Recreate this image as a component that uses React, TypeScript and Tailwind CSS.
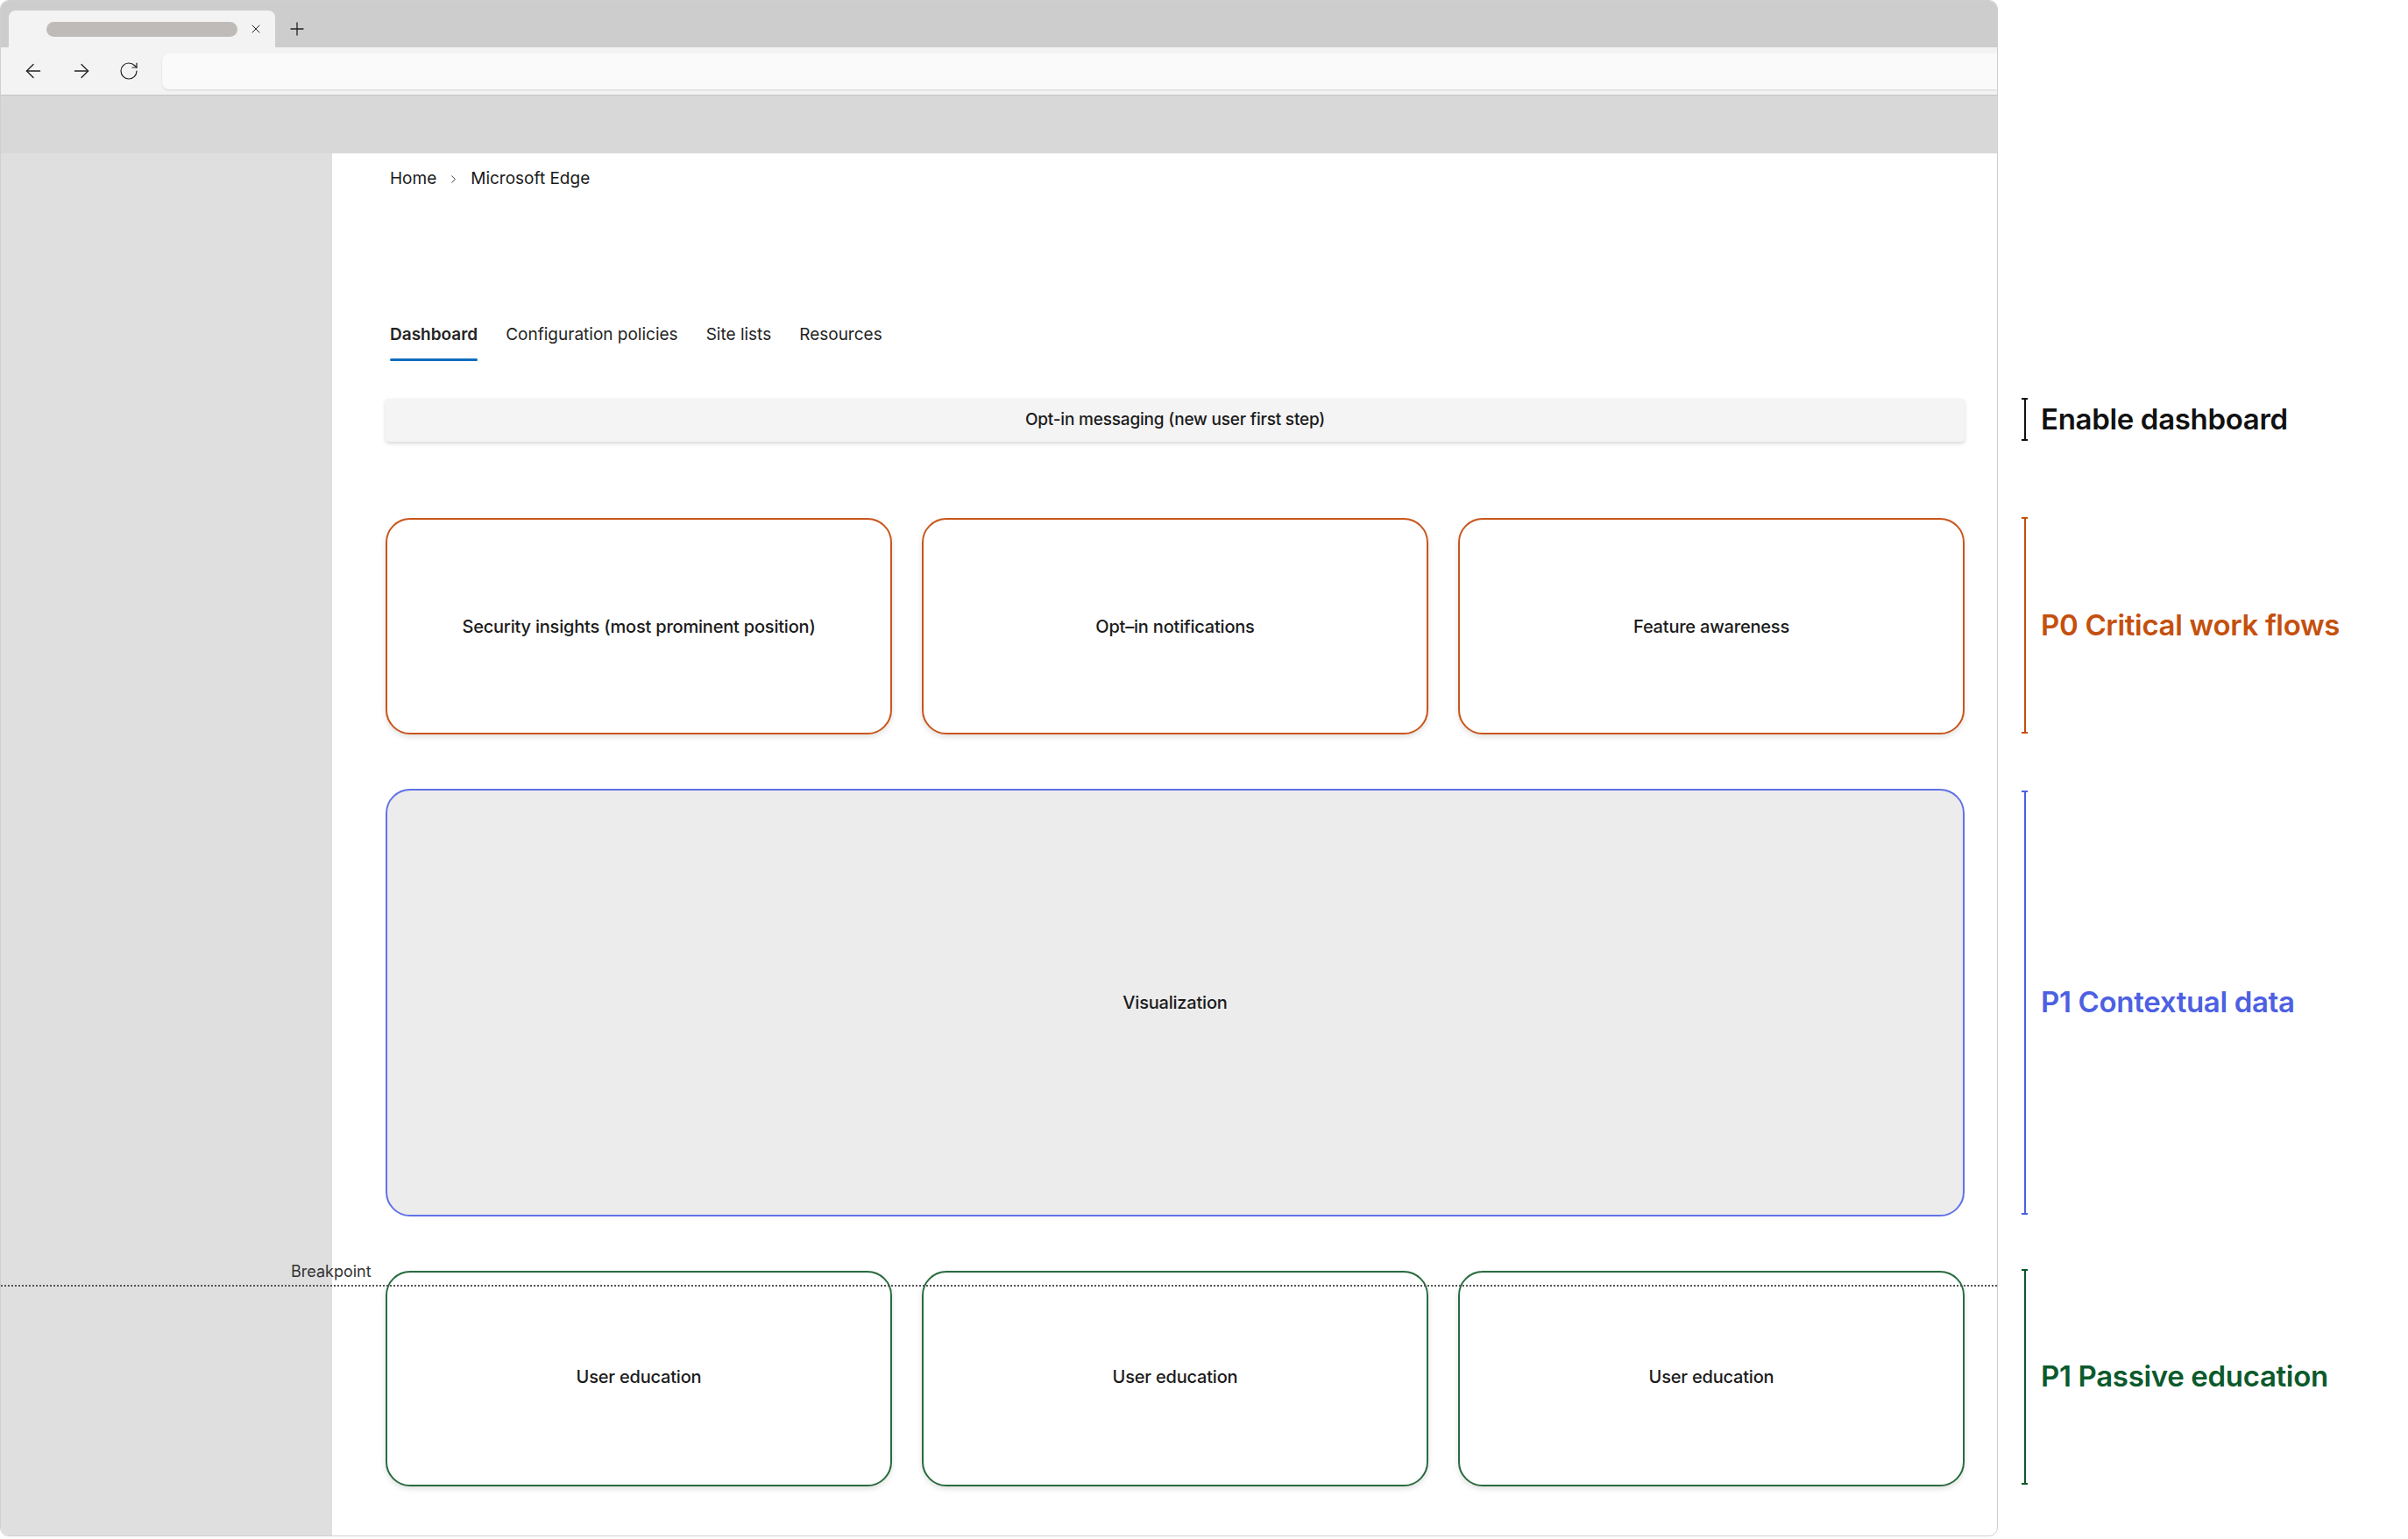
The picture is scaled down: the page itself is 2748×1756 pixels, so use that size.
import { ArrowLeft, ArrowRight, RotateCw, X, Plus, ChevronRight } from "lucide-react";

const tabs = ["Dashboard", "Configuration policies", "Site lists", "Resources"];

const Card = ({ label, tone }: { label: string; tone: "orange" | "green" }) => (
  <div
    className={
      tone === "orange"
        ? "h-full rounded-[28px] border-2 border-[#c9561c] bg-white shadow-[0_3px_6px_rgba(0,0,0,0.12)] flex items-center justify-center"
        : "h-full rounded-[28px] border-2 border-[#2a6b40] bg-white shadow-[0_3px_6px_rgba(0,0,0,0.12)] flex items-center justify-center pb-[4px]"
    }
  >
    <span className="text-[20px] font-medium text-[#1b1b1b] tracking-[-0.01em]">{label}</span>
  </div>
);

const Bracket = ({ color }: { color: string }) => (
  <div className="w-[7px] self-stretch flex flex-col items-center">
    <div className="h-[2px] w-[7px]" style={{ backgroundColor: color }} />
    <div className="flex-1 w-[2px]" style={{ backgroundColor: color }} />
    <div className="h-[2px] w-[7px]" style={{ backgroundColor: color }} />
  </div>
);

const Note = ({ h, color, text, mt }: { h: string; color: string; text: string; mt: string }) => (
  <div className={`flex items-stretch ${h} ${mt}`}>
    <Bracket color={color} />
    <div className="self-center ml-[15px] text-[33px] font-semibold tracking-[-0.01em]" style={{ color }}>
      {text}
    </div>
  </div>
);

export default function App() {
  return (
    <div className="w-[2748px] h-[1756px] bg-white flex font-['Inter',sans-serif]">
      {/* browser window */}
      <div className="relative w-[2280px] h-[1753px] flex flex-col rounded-[10px] border border-[#cfcfcf] overflow-hidden">
        {/* tab strip */}
        <div className="h-[53px] bg-[#cdcdcd] flex items-end pl-[9px]">
          <div className="w-[304px] h-[42px] bg-[#f3f3f3] rounded-t-[8px] flex items-center pl-[43px]">
            <div className="w-[218px] h-[17px] rounded-full bg-[#bfbbb8]" />
            <X className="ml-[13px] text-[#222]" size={16} strokeWidth={1.5} />
          </div>
          <div className="h-[42px] flex items-center ml-[13px]">
            <Plus className="text-[#222]" size={24} strokeWidth={1.3} />
          </div>
        </div>

        {/* toolbar */}
        <div className="h-[54px] bg-[#f3f3f3] flex items-center">
          <div className="w-[184px] flex items-center pl-[24px] gap-[29px] text-[#222]">
            <ArrowLeft size={26} strokeWidth={1.2} />
            <ArrowRight size={26} strokeWidth={1.2} />
            <RotateCw size={24} strokeWidth={1.2} />
          </div>
          <div className="flex-1 h-[41px] bg-[#fafafa] rounded-l-[8px] shadow-[0_1px_2px_rgba(0,0,0,0.12)]" />
        </div>
        <div className="h-[1px] bg-[#c4c4c4]" />
        <div className="h-[66px] bg-[#d8d8d8]" />

        {/* body */}
        <div className="flex-1 flex">
          <div className="w-[378px] bg-[#dfdfdf]" />
          <div className="flex-1 pl-[61px] pr-[37px] flex flex-col">
            <div className="mt-[15px] pl-[5px] h-[28px] flex items-center text-[19px] text-[#1a1a1a]">
              <span>Home</span>
              <ChevronRight className="mx-[12px] text-[#333]" size={15} strokeWidth={1.5} />
              <span>Microsoft Edge</span>
            </div>

            <div className="mt-[150px] pl-[5px] flex gap-[32px]">
              {tabs.map((t, i) => (
                <div key={t} className="flex flex-col">
                  <span
                    className={
                      i === 0
                        ? "h-[28px] leading-[28px] text-[19px] font-semibold text-[#242424]"
                        : "h-[28px] leading-[28px] text-[19px] text-[#242424]"
                    }
                  >
                    {t}
                  </span>
                  <div className={i === 0 ? "mt-[13px] h-[3px] bg-[#0f6cbd] rounded-full" : "mt-[13px] h-[3px]"} />
                </div>
              ))}
            </div>

            <div className="mt-[43px] h-[49px] rounded-[4px] bg-[#f4f4f4] shadow-[0_2px_4px_rgba(0,0,0,0.16)] flex items-center justify-center">
              <span className="text-[19px] font-medium text-[#1b1b1b] tracking-[-0.01em]">
                Opt-in messaging (new user first step)
              </span>
            </div>

            <div className="mt-[87px] h-[247px] grid grid-cols-3 gap-[34px]">
              <Card tone="orange" label="Security insights (most prominent position)" />
              <Card tone="orange" label="Opt–in notifications" />
              <Card tone="orange" label="Feature awareness" />
            </div>

            <div className="mt-[62px] h-[488px] rounded-[28px] border-2 border-[#6172e8] bg-[#ececec] flex items-center justify-center">
              <span className="text-[20px] font-medium text-[#1b1b1b] tracking-[-0.01em]">Visualization</span>
            </div>

            <div className="mt-[62px] h-[246px] grid grid-cols-3 gap-[34px]">
              <Card tone="green" label="User education" />
              <Card tone="green" label="User education" />
              <Card tone="green" label="User education" />
            </div>
          </div>
        </div>

        {/* breakpoint marker */}
        <div className="absolute left-0 right-0 top-[1465px] border-t-2 border-dotted border-[#555]" />
        <div className="absolute left-[331px] top-[1436px] text-[18px] text-[#333]">Breakpoint</div>
      </div>

      {/* annotations */}
      <div className="ml-[27px] pt-[454px] flex flex-col">
        <Note h="h-[49px]" mt="" color="#111111" text="Enable dashboard" />
        <Note h="h-[247px]" mt="mt-[87px]" color="#c4500e" text="P0 Critical work flows" />
        <Note h="h-[484px]" mt="mt-[65px]" color="#4d60e2" text="P1 Contextual data" />
        <Note h="h-[246px]" mt="mt-[62px]" color="#0b5a2c" text="P1 Passive education" />
      </div>
    </div>
  );
}
